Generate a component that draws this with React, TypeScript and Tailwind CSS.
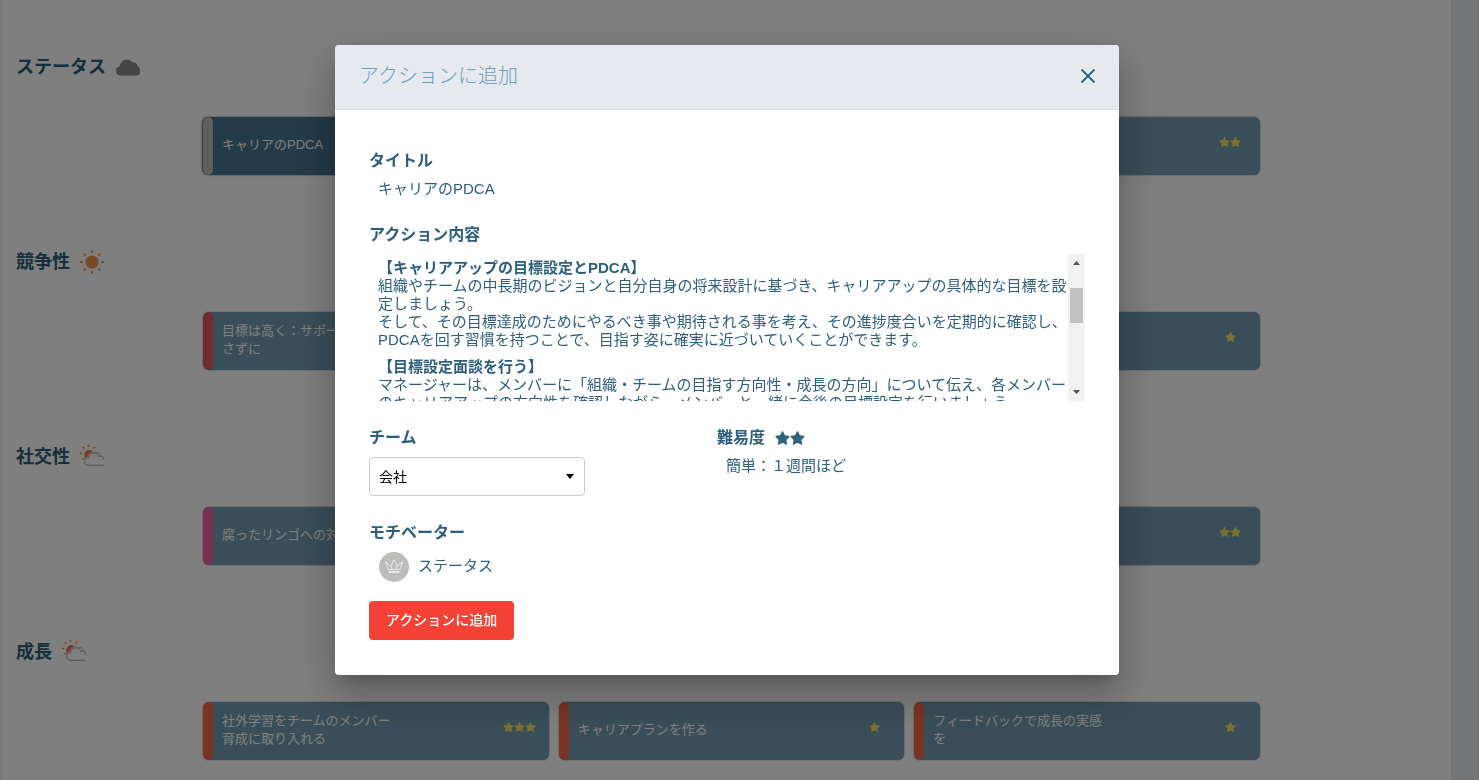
import React, { useState } from "react";
import { FaStar } from "react-icons/fa";

type Action = {
  title: string;
  stars: number;
  selected?: boolean;
};

type Motivator = {
  name: string;
  weather: "cloud" | "sun" | "partly";
  stripe: string;
  actions: Action[];
};

const motivators: Motivator[] = [
  {
    name: "ステータス",
    weather: "cloud",
    stripe: "bg-[#bebebe]",
    actions: [
      { title: "キャリアのPDCA", stars: 2, selected: true },
      { title: "役割を任せる", stars: 1 },
      { title: "成果を共有する", stars: 2 },
    ],
  },
  {
    name: "競争性",
    weather: "sun",
    stripe: "bg-[#e05858]",
    actions: [
      { title: "目標は高く：サポートを絶やさずに", stars: 2 },
      { title: "目標を見える化する", stars: 1 },
      { title: "チームで競い合う", stars: 1 },
    ],
  },
  {
    name: "社交性",
    weather: "partly",
    stripe: "bg-[#ec5ea2]",
    actions: [
      { title: "腐ったリンゴへの対処", stars: 3 },
      { title: "ランチ会を開く", stars: 1 },
      { title: "雑談の時間を作る", stars: 2 },
    ],
  },
  {
    name: "成長",
    weather: "partly",
    stripe: "bg-[#f06a46]",
    actions: [
      { title: "社外学習をチームのメンバー育成に取り入れる", stars: 3 },
      { title: "キャリアプランを作る", stars: 1 },
      { title: "フィードバックで成長の実感を", stars: 1 },
    ],
  },
];

const WeatherIcon = ({ kind }: { kind: Motivator["weather"] }) => {
  if (kind === "cloud") {
    return (
      <svg className="h-6 w-6" viewBox="0 0 24 24" fill="#888888">
        <path d="M4 20.500C1.800 20.500 0 18.500 0 16C0 13.500 1.500 11.800 3.800 11.300C4.500 7.300 7.200 4.500 10.800 4.500C13.200 4.500 15.200 5.700 16.300 7.300C19.200 6.800 21.500 8.700 21.800 11.500C23.200 12.300 24 13.500 24 15.500V17.500C24 19.300 22.800 20.500 21 20.500Z" />
      </svg>
    );
  }
  if (kind === "sun") {
    return (
      <svg
        className="h-6 w-6"
        viewBox="0 0 24 24"
        stroke="#f5924a"
        strokeWidth="1.8"
      >
        <circle cx="12" cy="12" r="6.6" fill="#f5924a" stroke="none" />
        <path d="M12 0V2.800M12 21.200V24M0 12H3M21 12H24M3.600 3.600L5.800 5.800M18.200 18.200L20.400 20.400M3.600 20.400L5.800 18.200M18.200 5.800L20.400 3.600" />
      </svg>
    );
  }
  return (
    <svg className="h-6 w-6" viewBox="0 0 24 24" fill="none">
      <path
        d="M5.300 13.200A4.600 4.600 0 1 1 12.800 6.800C10.200 7.300 8.300 9 7.800 11.500C6.700 11.800 5.900 12.400 5.300 13.200Z"
        fill="#ef7a3c"
      />
      <path
        d="M8.500 0V1.800M2.800 2L4.300 3.500M15 2L13.700 3.500M0 8.500H2.200M2.700 14.500L4 13.200"
        stroke="#ef7a3c"
        strokeWidth="1.6"
      />
      <path
        d="M24 20.300H8.500C6.200 20.300 4.700 18.800 4.700 16.800C4.700 14.500 6.300 13 8.500 13C8.700 9.800 10.800 7.800 13.700 7.800C16.300 7.800 18 9.200 18.700 11.300C21.500 10.800 23.500 12.500 24 15"
        stroke="#b8b8b8"
        strokeWidth="1.2"
      />
      <path d="M15.500 7.500C18.500 6.800 20.800 8 21.500 10.500" stroke="#b8b8b8" />
    </svg>
  );
};

const Stars = ({ count, className }: { count: number; className: string }) => (
  <span className="flex" role="img" aria-label={`星${count}つ`}>
    {Array.from({ length: count }, (_, i) => (
      <FaStar key={i} className={className} />
    ))}
  </span>
);

const ActionCard = ({ action, stripe }: { action: Action; stripe: string }) => (
  <button
    type="button"
    className={
      action.selected
        ? "flex h-[58px] items-center overflow-hidden rounded-md bg-[#467490] text-left text-white shadow-[-1px_0_2px_#555]"
        : "flex h-[58px] items-center overflow-hidden rounded-md bg-[#749cb2] text-left text-white shadow-[0_0_2px_#8a8a8a]"
    }
  >
    <span className={`h-full w-[10px] shrink-0 rounded-md ${stripe}`} />
    <span className="ml-[9px] w-[175px] pb-0.5 text-[13px] leading-[18px]">
      {action.title}
    </span>
    <span className="mb-2 ml-auto flex w-[59px] shrink-0 justify-center">
      <Stars count={action.stars} className="h-3 w-[11px] text-[#f0e060]" />
    </span>
  </button>
);

const Field = ({ label, children }: { label: React.ReactNode; children: React.ReactNode }) => (
  <section className="mb-[25px]">
    <h3 className="mb-[7px] flex h-6 items-center gap-2.5 text-base font-bold">
      {label}
    </h3>
    {children}
  </section>
);

const ActionDialog = ({ onClose }: { onClose: () => void }) => {
  const [team, setTeam] = useState("会社");

  return (
    <div className="fixed inset-0 flex items-start justify-center overflow-hidden bg-black/50 pt-[45px] pr-[25px]">
      <div
        role="dialog"
        aria-labelledby="dialog-title"
        className="w-full max-w-[784px] rounded bg-white text-[#2d5f7c] shadow-[0_11px_15px_-7px_rgba(0,0,0,0.2),0_24px_38px_3px_rgba(0,0,0,0.14),0_9px_46px_8px_rgba(0,0,0,0.12)]"
      >
        <header className="flex h-[65px] items-center justify-between rounded-t border-b border-[#dcdfe3] bg-[#e6e9ee] px-6 pb-0.5">
          <h2 id="dialog-title" className="text-xl font-light text-[#6f9fb5]">
            アクションに追加
          </h2>
          <button type="button" aria-label="閉じる" onClick={onClose}>
            <svg
              className="h-3.5 w-3.5"
              viewBox="0 0 14 14"
              stroke="#2d647c"
              strokeWidth="1.8"
              strokeLinecap="round"
            >
              <path d="M1 1L13 13M13 1L1 13" />
            </svg>
          </button>
        </header>

        <div className="px-[34px] pt-[39px] pb-[35px]">
          <Field label="タイトル">
            <p className="pl-[9px] text-[15px] leading-[18px]">キャリアのPDCA</p>
          </Field>

          <Field label="アクション内容">
            <div className="flex h-[147px]">
              <div className="flex-1 overflow-hidden pt-[5px] pl-[9px] text-[15px] leading-[18px]">
                <h4 className="font-bold">【キャリアアップの目標設定とPDCA】</h4>
                <p className="mb-[9px]">
                  組織やチームの中長期のビジョンと自分自身の将来設計に基づき、キャリアアップの具体的な目標を設定しましょう。
                  <br />
                  そして、その目標達成のためにやるべき事や期待される事を考え、その進捗度合いを定期的に確認し、PDCAを回す習慣を持つことで、目指す姿に確実に近づいていくことができます。
                </p>
                <h4 className="font-bold">【目標設定面談を行う】</h4>
                <p>
                  マネージャーは、メンバーに「組織・チームの目指す方向性・成長の方向」について伝え、各メンバーのキャリアアップの方向性を確認しながら、メンバーと一緒に今後の目標設定を行いましょう。
                </p>
              </div>
              {/* scrollbar */}
              <div className="flex w-[17px] shrink-0 flex-col items-center bg-[#f1f1f1]">
                <svg className="h-[17px] w-[17px]" viewBox="0 0 17 17" fill="#505050">
                  <path d="M5 11L8.500 7L12 11Z" />
                </svg>
                <div className="mt-[17px] h-[35px] w-[13px] bg-[#c1c1c1]" />
                <svg className="mt-auto h-[17px] w-[17px]" viewBox="0 0 17 17" fill="#505050">
                  <path d="M5 6L8.500 10L12 6Z" />
                </svg>
              </div>
            </div>
          </Field>

          <div className="grid grid-cols-2 pr-5">
            <Field label={<label htmlFor="team">チーム</label>}>
              <div className="relative w-[216px]">
                <select
                  id="team"
                  value={team}
                  onChange={(e) => setTeam(e.target.value)}
                  className="block h-[39px] w-full appearance-none rounded border border-[#cccccc] bg-white px-[9px] text-sm text-black"
                >
                  <option value="会社">会社</option>
                </select>
                <svg
                  className="pointer-events-none absolute top-[17px] right-[11px] h-[5px] w-2"
                  viewBox="0 0 8 5"
                >
                  <path d="M0 0H8L4 5Z" />
                </svg>
              </div>
            </Field>

            <Field
              label={
                <>
                  難易度
                  <Stars count={2} className="h-4 w-[15px] text-[#2d647c]" />
                </>
              }
            >
              <p className="pl-[9px] text-[15px] leading-[18px]">簡単：１週間ほど</p>
            </Field>
          </div>

          <Field label="モチベーター">
            <div className="-mb-1.5 flex items-center gap-[9px] pl-[10px]">
              <svg className="h-[30px] w-[30px]" viewBox="0 0 30 30" fill="none">
                <circle cx="15" cy="15" r="15" fill="#bcbcba" />
                <path
                  d="M9 17.500L6.500 10L11.800 14L15 7.500L18.200 14L23.500 10L21 17.500Z"
                  stroke="#e8e8e8"
                  strokeLinejoin="round"
                />
                <path d="M11.800 14L13 17M18.200 14L17 17" stroke="#e8e8e8" />
                <path d="M9.500 20H20.500" stroke="#e8e8e8" strokeWidth="2" />
              </svg>
              <span className="pb-0.5 text-[15px] leading-[18px]">ステータス</span>
            </div>
          </Field>

          <button
            type="button"
            onClick={onClose}
            className="h-[39px] rounded bg-[#f44336] px-[17px] pb-0.5 text-sm font-medium text-white"
          >
            アクションに追加
          </button>
        </div>
      </div>
    </div>
  );
};

const App = () => {
  const [open, setOpen] = useState(true);

  return (
    <div className="h-screen overflow-hidden border-l-2 border-[#f2f2f4] bg-[#e8ebf0] pr-7 font-['Liberation_Sans','Noto_Sans_CJK_JP',sans-serif]">
      <main className="min-h-full bg-white pt-[49px]">
        {motivators.map((m) => (
          <section key={m.name} className="mb-[69px]">
            <h2 className="flex h-9 items-center gap-2.5 pl-3.5 text-lg font-bold text-[#2b6078]">
              {m.name}
              <WeatherIcon kind={m.weather} />
            </h2>
            <div className="mt-8 grid grid-cols-3 gap-2.5 pr-[191px] pl-[201px]">
              {m.actions.map((a) => (
                <ActionCard key={a.title} action={a} stripe={m.stripe} />
              ))}
            </div>
          </section>
        ))}
      </main>
      {open && <ActionDialog onClose={() => setOpen(false)} />}
    </div>
  );
};

export default App;
